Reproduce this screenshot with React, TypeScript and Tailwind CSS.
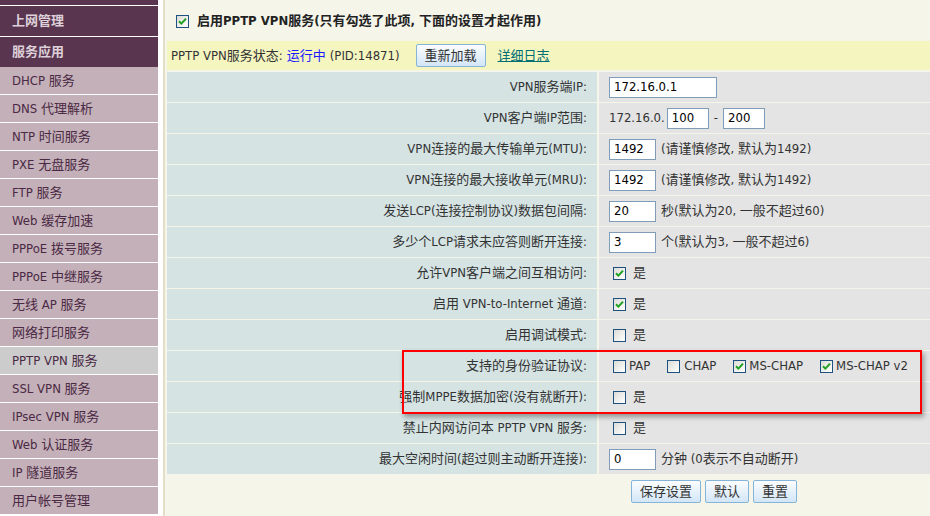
import type { ReactNode } from "react";

const FONT = "font-['Tahoma','DejaVu_Sans_Condensed','Liberation_Sans','Noto_Sans_CJK_SC',sans-serif]";

const navItems = [
  "DHCP 服务",
  "DNS 代理解析",
  "NTP 时间服务",
  "PXE 无盘服务",
  "FTP 服务",
  "Web 缓存加速",
  "PPPoE 拨号服务",
  "PPPoE 中继服务",
  "无线 AP 服务",
  "网络打印服务",
  "PPTP VPN 服务",
  "SSL VPN 服务",
  "IPsec VPN 服务",
  "Web 认证服务",
  "IP 隧道服务",
  "用户帐号管理",
];

function Check({ on }: { on?: boolean }) {
  return (
    <span className="flex h-[13px] w-[13px] shrink-0 items-center justify-center border border-[#1c5180] bg-gradient-to-br from-[#dcdcd6] to-white">
      {on && (
        <svg width="9" height="9" viewBox="0 0 9 9">
          <path d="M1 4.2 L3.4 6.6 L8 1.6" fill="none" stroke="#21a121" strokeWidth="2" />
        </svg>
      )}
    </span>
  );
}

function Field({ value, w = "w-[47px]" }: { value: string; w?: string }) {
  return (
    <span className={`flex h-[21px] ${w} items-center border border-[#7f9db9] bg-white pl-[4px] text-black`}>
      {value}
    </span>
  );
}

function Yes({ on }: { on?: boolean }) {
  return (
    <span className="flex items-center gap-[7px] pl-[4px]">
      <Check on={on} />
      是
    </span>
  );
}

function Row({ label, children }: { label: string; children: ReactNode }) {
  return (
    <div className="flex h-[30px] gap-[2px]">
      <div className="flex w-[430px] items-center justify-end bg-[#d5e3e3] pr-[10px] text-[#333]">{label}</div>
      <div className="flex flex-1 items-center bg-[#e4e4e4] pl-[10px] text-[#333]">{children}</div>
    </div>
  );
}

function Btn({ children }: { children: ReactNode }) {
  return (
    <span className="flex h-[23px] items-center rounded-[2px] border border-[#86b4d9] bg-gradient-to-b from-[#fbfdff] to-[#d3e6f7] px-[8px] text-[#333]">
      {children}
    </span>
  );
}

export default function App() {
  return (
    <div className={`relative flex h-[516px] w-[930px] overflow-hidden bg-white text-[13px] ${FONT}`}>
      {/* sidebar */}
      <aside className="flex w-[158px] shrink-0 flex-col">
        <div className="h-[5px] bg-[#5a3550]" />
        <div className="mt-px flex h-[30px] items-center bg-[#5a3550] pl-[12px] font-bold text-[#ddd0d8]">上网管理</div>
        <div className="mt-px flex h-[30px] items-center bg-[#5a3550] pl-[12px] font-bold text-[#ddd0d8]">服务应用</div>
        <div className="flex flex-col gap-px">
          {navItems.map((n) => (
            <div
              key={n}
              className={`flex h-[27px] items-center pl-[12px] text-[#4a2944] ${
                n === "PPTP VPN 服务" ? "bg-[#cccccc]" : "bg-[#c4b0b8]"
              }`}
            >
              {n}
            </div>
          ))}
        </div>
      </aside>

      {/* main */}
      <main className="ml-[5px] flex flex-1 flex-col border-l-2 border-[#e3dfc6] bg-[#f5f5ea] pl-[2px]">
        <div className="flex h-[41px] items-center gap-[8px] pl-[9px] pt-px font-bold text-[#222]">
          <Check on />
          启用PPTP VPN服务(只有勾选了此项, 下面的设置才起作用)
        </div>
        <div className="flex h-[29px] items-center bg-[#f5f5c0] pl-[4px] text-[#333]">
          <span>PPTP VPN服务状态: </span>
          <span className="ml-[4px] text-[#1a1aff]">运行中</span>
          <span className="ml-[4px]">(PID:14871)</span>
          <span className="ml-[16px]">
            <Btn>重新加载</Btn>
          </span>
          <span className="ml-[12px] text-[#006f73] underline">详细日志</span>
        </div>

        <div className="mt-[2px] flex flex-col gap-px">
          <Row label="VPN服务端IP:">
            <Field value="172.16.0.1" w="w-[108px]" />
          </Row>
          <Row label="VPN客户端IP范围:">
            <span className="mr-[2px]">172.16.0.</span>
            <Field value="100" w="w-[42px]" />
            <span className="mx-[5px]">-</span>
            <Field value="200" w="w-[42px]" />
          </Row>
          <Row label="VPN连接的最大传输单元(MTU):">
            <Field value="1492" />
            <span className="ml-[5px]">(请谨慎修改, 默认为1492)</span>
          </Row>
          <Row label="VPN连接的最大接收单元(MRU):">
            <Field value="1492" />
            <span className="ml-[5px]">(请谨慎修改, 默认为1492)</span>
          </Row>
          <Row label="发送LCP(连接控制协议)数据包间隔:">
            <Field value="20" />
            <span className="ml-[5px]">秒(默认为20, 一般不超过60)</span>
          </Row>
          <Row label="多少个LCP请求未应答则断开连接:">
            <Field value="3" />
            <span className="ml-[5px]">个(默认为3, 一般不超过6)</span>
          </Row>
          <Row label="允许VPN客户端之间互相访问:">
            <Yes on />
          </Row>
          <Row label="启用 VPN-to-Internet 通道:">
            <Yes on />
          </Row>
          <Row label="启用调试模式:">
            <Yes />
          </Row>
          <Row label="支持的身份验证协议:">
            <span className="flex items-center pl-[4px]">
              <Check />
              <span className="ml-[3px]">PAP</span>
              <span className="ml-[17px]">
                <Check />
              </span>
              <span className="ml-[4px]">CHAP</span>
              <span className="ml-[17px]">
                <Check on />
              </span>
              <span className="ml-[3px]">MS-CHAP</span>
              <span className="ml-[17px]">
                <Check on />
              </span>
              <span className="ml-[3px]">MS-CHAP v2</span>
            </span>
          </Row>
          <Row label="强制MPPE数据加密(没有就断开):">
            <Yes />
          </Row>
          <Row label="禁止内网访问本 PPTP VPN 服务:">
            <Yes />
          </Row>
          <Row label="最大空闲时间(超过则主动断开连接):">
            <Field value="0" />
            <span className="ml-[5px]">分钟 (0表示不自动断开)</span>
          </Row>
        </div>

        <div className="mt-[6px] flex gap-[4px] pl-[464px]">
          <Btn>保存设置</Btn>
          <Btn>默认</Btn>
          <Btn>重置</Btn>
        </div>
      </main>

      {/* highlight box */}
      <div className="pointer-events-none absolute left-[402px] top-[350px] h-[64px] w-[520px] border-2 border-[#ff0000] shadow-[2px_3px_5px_rgba(0,0,0,0.35)]" />
    </div>
  );
}
